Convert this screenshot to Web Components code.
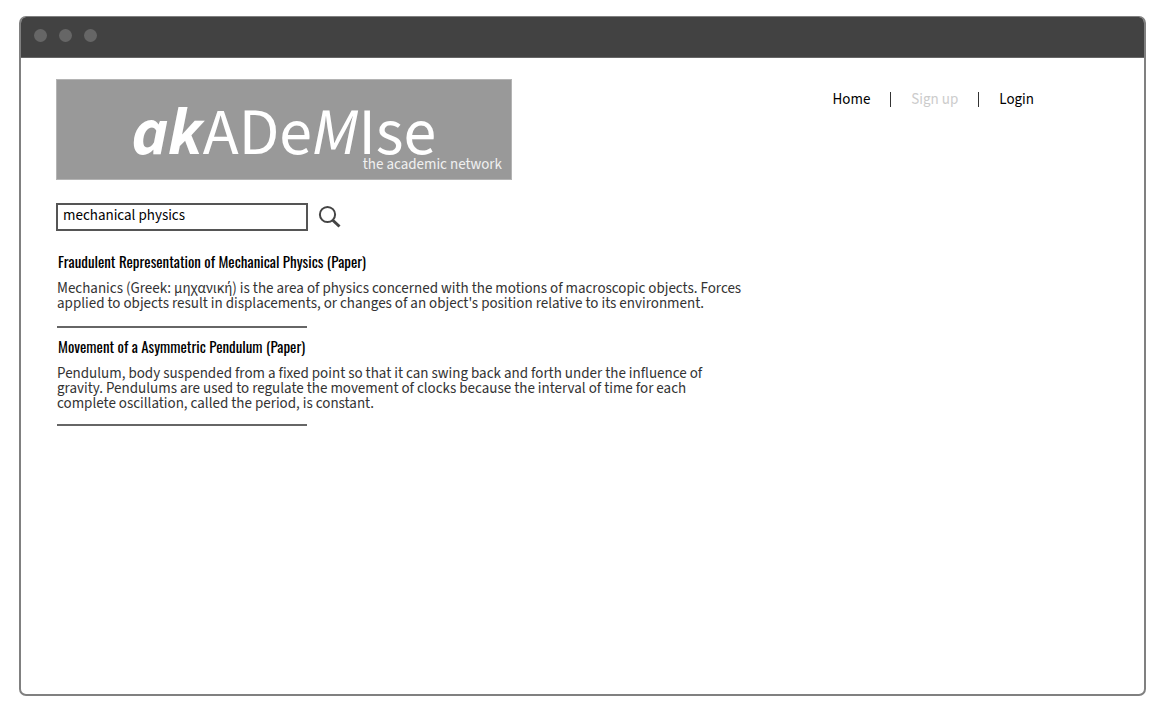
<!DOCTYPE html>
<html lang="en">
<head>
<meta charset="utf-8">
<title>akADeMIse</title>
<style>
  * { box-sizing: border-box; }
  body {
    margin: 0;
    min-height: 100vh;
    display: flex;
    padding: 16px 18px 19px 19px;
    background: #fff;
    color: #333;
    font: 15px/15px "Source Sans Pro", "Source Sans 3", "Noto Sans CJK SC", "Noto Sans", sans-serif;
  }
</style>
</head>
<body>
<browser-frame>
  <site-header slot="header">
    <site-logo></site-logo>
    <site-nav></site-nav>
  </site-header>
  <search-bar value="mechanical physics"></search-bar>
  <result-list>
    <search-result>
      <span slot="title">Fraudulent Representation of Mechanical Physics (Paper)</span>
      Mechanics (Greek: μηχανική) is the area of physics concerned with the motions of macroscopic objects. Forces applied to objects result in displacements, or changes of an object's position relative to its environment.
    </search-result>
    <search-result>
      <span slot="title">Movement of a Asymmetric Pendulum (Paper)</span>
      Pendulum, body suspended from a fixed point so that it can swing back and forth under the influence of gravity. Pendulums are used to regulate the movement of clocks because the interval of time for each complete oscillation, called the period, is constant.
    </search-result>
  </result-list>
</browser-frame>

<script>
const define = (name, html, setup) => customElements.define(name, class extends HTMLElement {
  constructor() {
    super();
    this.attachShadow({ mode: "open" }).innerHTML = html;
  }
  connectedCallback() { if (setup) setup(this); }
});

define("browser-frame", `
  <style>
    :host { flex: 1; display: flex; flex-direction: column; min-width: 0; box-sizing: border-box;
      border: 2px solid #808080; border-top: 1px solid #808080; border-radius: 7px; overflow: hidden; background: #fff; }
    .bar { display: flex; gap: 12px; height: 41px; padding: 12px 13px; box-sizing: border-box; background: #424242; border-bottom: 1px solid #666; }
    .dot { width: 13px; height: 13px; border-radius: 50%; background: #666; }
    .page { padding: 21px 36px 32px 35px; }
  </style>
  <div class="bar"><span class="dot"></span><span class="dot"></span><span class="dot"></span></div>
  <div class="page"><slot name="header"></slot><slot></slot></div>`);

define("site-header", `
  <style>:host { display: flex; justify-content: space-between; align-items: flex-start; }</style>
  <slot></slot>`);

define("site-logo", `
  <style>
    :host { position: relative; display: block; flex: 0 1 456px; height: 101px; box-sizing: border-box;
      background: #999; border: 1px solid #b4b4b4; color: #fff; text-align: center; }
    h1 { margin: 0; font-size: 66px; line-height: 106px; font-weight: 400; white-space: nowrap; }
    em, b { font-style: italic; }
    .tag { position: absolute; right: 9px; bottom: 6px; line-height: 16px; color: #f0f0f0; }
  </style>
  <h1><b>ak</b>ADe<em>M</em>Ise</h1>
  <span class="tag">the academic network</span>`);

define("site-nav", `
  <style>
    :host { display: block; padding: 13px 74px 0 0; }
    nav { display: flex; gap: 20px; line-height: 16px; color: #000; }
    a { color: inherit; text-decoration: none; }
    i { width: 1px; height: 15px; background: #333; }
    .muted { color: #ccc; }
  </style>
  <nav><a href="#home">Home</a><i></i><a class="muted" href="#signup">Sign up</a><i></i><a href="#login">Login</a></nav>`);

define("search-bar", `
  <style>
    :host { display: block; margin-top: 23px; }
    form { display: flex; align-items: center; gap: 10px; }
    input { box-sizing: border-box; width: 252px; height: 28px; margin: 0; padding: 0 5px 4px; border: 2px solid #555;
      border-radius: 0; background: #fff; color: #000; font: inherit; outline: 0; }
    button { display: block; width: 24px; height: 24px; padding: 0; border: 0; background: none; }
    svg { display: block; }
  </style>
  <form role="search">
    <input type="text" aria-label="Search papers">
    <button type="button" aria-label="Search"><svg width="24" height="24" viewBox="0 0 24 24" fill="none" stroke="#444"><circle cx="9.5" cy="9.5" r="7.6" stroke-width="2"/><path d="M14.5 15L21.500 21.500" stroke-width="3"/></svg></button>
  </form>`, el => { el.shadowRoot.querySelector("input").value = el.getAttribute("value"); });

define("result-list", `
  <style>:host { display: block; max-width: 690px; margin-top: 20px; padding-left: 1px; }</style>
  <slot></slot>`);

define("search-result", `
  <style>
    :host { display: block; margin-bottom: 8px; }
    h2 { margin: 0 0 10px; padding-left: 1px; font: 400 15px/20px Oswald, "Liberation Sans Narrow", "Roboto Condensed", sans-serif; color: #000; }
    p { margin: 0; min-height: 32px; }
    hr { width: 250px; height: 2px; margin: 13px 0 0; border: 0; background: #666; }
  </style>
  <h2><slot name="title"></slot></h2>
  <p><slot></slot></p>
  <hr>`);
</script>
</body>
</html>
